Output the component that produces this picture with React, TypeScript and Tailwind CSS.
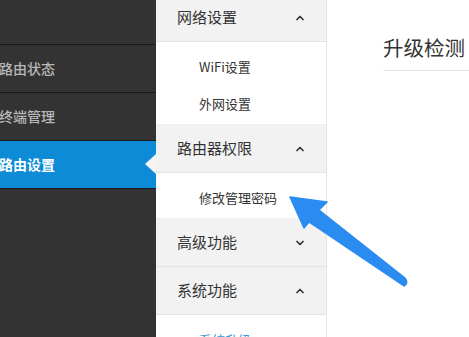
import { ChevronDown, ChevronUp } from "lucide-react";

type MenuGroup = {
  title: string;
  open: boolean;
  items: { label: string; active?: boolean }[];
};

const sideItems = [
  { label: "路由状态", active: false },
  { label: "终端管理", active: false },
  { label: "路由设置", active: true },
];

const groups: MenuGroup[] = [
  { title: "网络设置", open: true, items: [{ label: "WiFi设置" }, { label: "外网设置" }] },
  { title: "路由器权限", open: true, items: [{ label: "修改管理密码" }] },
  { title: "高级功能", open: false, items: [] },
  { title: "系统功能", open: true, items: [{ label: "系统升级", active: true }] },
];

function App() {
  return (
    <div
      className="relative flex w-[469px] h-[337px] overflow-hidden bg-white"
      style={{ fontFamily: '"Noto Sans CJK SC", "Noto Sans", sans-serif' }}
    >
      {/* Left sidebar */}
      <div className="w-[156px] shrink-0 bg-[#333333]">
        <div className="h-[45px] border-b border-[#1c1c1c]" />
        {sideItems.map((item) => (
          <div
            key={item.label}
            className={`relative flex items-center h-[48px] border-b border-[#1c1c1c] text-[14px] ${
              item.active ? "bg-[#0d8bd6] text-white font-bold" : "text-[#b8b8b8] font-medium"
            }`}
          >
            <span className="-ml-[1px]">{item.label}</span>
            {item.active && (
              <span className="absolute right-0 top-[13px] w-0 h-0 border-y-[10px] border-y-transparent border-r-[11px] border-r-[#f4f4f4]" />
            )}
          </div>
        ))}
      </div>

      {/* Middle menu */}
      <div className="w-[171px] shrink-0 border-r border-[#e4e4e4]">
        <div className="-mt-[6px]">
          {groups.map((group) => (
            <div key={group.title}>
              <div className="flex items-center justify-between h-[48px] pl-[21px] pr-[20px] bg-[#f2f2f2] border-b border-[#e3e3e3] text-[15px] text-[#333333]">
                <span>{group.title}</span>
                {group.open ? (
                  <ChevronUp size={12} strokeWidth={3.5} className="text-[#333333]" />
                ) : (
                  <ChevronDown size={12} strokeWidth={3.5} className="text-[#333333]" />
                )}
              </div>
              {group.open && group.items.length > 0 && (
                <div className="pt-[6px] pb-[2px] bg-white border-b border-[#eeeeee]">
                  {group.items.map((sub) => (
                    <div
                      key={sub.label}
                      className={`flex items-center h-[37px] pl-[43px] text-[13px] ${
                        sub.active ? "text-[#3c9ad8]" : "text-[#333333]"
                      }`}
                    >
                      {sub.label}
                    </div>
                  ))}
                </div>
              )}
            </div>
          ))}
        </div>
      </div>

      {/* Main content */}
      <div className="flex-1 pl-[56px] pt-[33px]">
        <div className="h-[28px] leading-[28px] text-[20.5px] text-[#333333] pb-[9px] box-content border-b border-[#e6e6e6]">
          升级检测
        </div>
      </div>

      {/* Pointer arrow */}
      <svg className="absolute left-0 top-0 pointer-events-none" width="469" height="337" viewBox="0 0 469 337">
        <path
          d="M290 197 L327 202 L319 210 L405 278 Q409 283 404 286 L309 222 L304 228 Z"
          fill="#2a8cf0"
          stroke="#2a8cf0"
          strokeWidth="1.5"
          strokeLinejoin="round"
        />
      </svg>
    </div>
  );
}

export default App;
